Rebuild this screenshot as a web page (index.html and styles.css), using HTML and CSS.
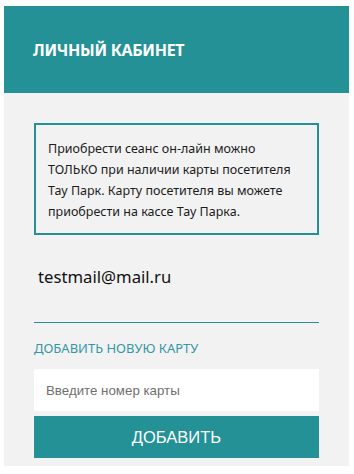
FILE: index.html
```html
<!DOCTYPE html>
<html lang="ru">
<head>
<meta charset="utf-8">
<link rel="stylesheet" href="styles.css">
</head>
<body>
<div class="card">
  <div class="header"><h1 class="title">ЛИЧНЫЙ КАБИНЕТ</h1></div>
  <div class="panel">
    <div class="notice">Приобрести сеанс он-лайн можно ТОЛЬКО при наличии карты посетителя Тау Парк. Карту посетителя вы можете приобрести на кассе Тау Парка.</div>
    <div class="email">testmail@mail.ru</div>
    <div class="label">ДОБАВИТЬ НОВУЮ КАРТУ</div>
    <input class="input" type="text" placeholder="Введите номер карты">
    <button class="btn" type="button">ДОБАВИТЬ</button>
  </div>
</div>
</body>
</html>
```
FILE: styles.css
```css
html, body { margin: 0; padding: 0; background: #fff; }
body { padding: 6px 5px 0 4px; font-family: "Noto Sans", "Open Sans", sans-serif; }
.card { width: 345px; }
.header {
  background: #239195;
  height: 87px;
  display: flex;
  align-items: center;
  padding-left: 29px;
}
.title {
  margin: 0;
  color: #fff;
  font-size: 16px;
  font-weight: 700;
  letter-spacing: -0.3px;
  padding-top: 1px;
}
.panel {
  background: #f2f2f2;
  padding: 30px 30px 8px 30px;
  display: flex;
  flex-direction: column;
}
.notice {
  border: 2px solid #239195;
  padding: 13px 12px 11px 12px;
  font-size: 12.5px;
  line-height: 21px;
  color: #1c1c1c;
}
.email {
  margin-top: 30px;
  padding: 0 0 33px 4px;
  border-bottom: 1px solid #239195;
  font-size: 16.7px;
  line-height: 24px;
  color: #111;
}
.label {
  margin-top: 16px;
  font-size: 13px;
  line-height: 18px;
  color: #3597a6;
}
.input {
  margin-top: 12px;
  height: 42px;
  box-sizing: border-box;
  border: none;
  background: #fff;
  padding: 0 12px;
  font-family: "Liberation Sans", Arial, sans-serif;
  font-size: 13.3px;
  outline: none;
}
.input::placeholder { color: #6f6f6f; }
.btn {
  margin-top: 5px;
  height: 42px;
  border: none;
  background: #239195;
  color: #fff;
  font-family: "Liberation Sans", Arial, sans-serif;
  font-size: 16.5px;
  padding: 0;
}
```
